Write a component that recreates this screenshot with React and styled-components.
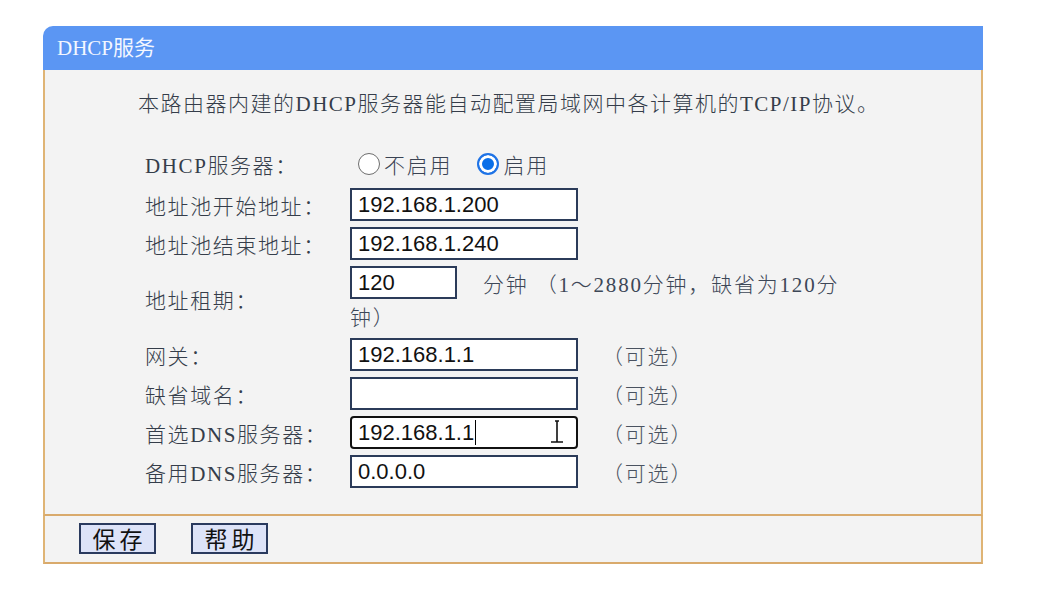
import React from "react";
import styled, { createGlobalStyle } from "styled-components";

const GlobalStyle = createGlobalStyle`
  body {
    margin: 0;
    background: #ffffff;
    font-family: "Liberation Serif", "Noto Sans CJK SC", serif;
  }
`;

const rows = [
  { label: "地址池开始地址：", value: "192.168.1.200" },
  { label: "地址池结束地址：", value: "192.168.1.240" },
];

const optionalRows = [
  { label: "网关：", value: "192.168.1.1" },
  { label: "缺省域名：", value: "" },
  { label: "首选DNS服务器：", value: "192.168.1.1", active: true },
  { label: "备用DNS服务器：", value: "0.0.0.0" },
];

const App = () => {
  return (
    <>
      <GlobalStyle />
      <Page>
        <Panel>
          <PanelHeader>DHCP服务</PanelHeader>
          <PanelBody>
            <Intro>本路由器内建的DHCP服务器能自动配置局域网中各计算机的TCP/IP协议。</Intro>
            <Form>
              <Label tall>DHCP服务器：</Label>
              <Value>
                <RadioOption>
                  <Radio />
                  不启用
                </RadioOption>
                <RadioOption>
                  <Radio checked />
                  启用
                </RadioOption>
              </Value>

              {rows.map((r) => (
                <React.Fragment key={r.label}>
                  <Label>{r.label}</Label>
                  <Value>
                    <TextBox>{r.value}</TextBox>
                  </Value>
                </React.Fragment>
              ))}

              <Label>地址租期：</Label>
              <LeaseValue>
                <LeaseLine>
                  <TextBox width={107}>120</TextBox>
                  <Hint>分钟 （1～2880分钟，缺省为120分</Hint>
                </LeaseLine>
                <LeaseLine>钟）</LeaseLine>
              </LeaseValue>

              {optionalRows.map((r) => (
                <React.Fragment key={r.label}>
                  <Label>{r.label}</Label>
                  <Value>
                    <TextBox active={r.active}>
                      {r.value}
                      {r.active && <Caret />}
                      {r.active && (
                        <Pointer width="14" height="24" viewBox="0 0 14 24">
                          <path d="M5 1h4M7 1v21M1 22h12" stroke="#111" strokeWidth="1.6" fill="none" />
                        </Pointer>
                      )}
                    </TextBox>
                    <Optional>（可选）</Optional>
                  </Value>
                </React.Fragment>
              ))}
            </Form>
          </PanelBody>
          <PanelFooter>
            <Button>保存</Button>
            <Button>帮助</Button>
          </PanelFooter>
        </Panel>
      </Page>
    </>
  );
};

const Page = styled.div`
  padding: 26px 0 0 43px;
`;

const Panel = styled.div`
  width: 940px;
`;

const PanelHeader = styled.div`
  height: 44px;
  background: #5b96f3;
  border-top-left-radius: 10px;
  color: #f4f7ff;
  font-size: 21px;
  line-height: 44px;
  padding-left: 14px;
`;

const PanelBody = styled.div`
  background: #f3f3f3;
  border-left: 2px solid #dfb475;
  border-right: 2px solid #dfb475;
  border-bottom: 2px solid #d9aa6c;
  padding: 22px 0 26px 93px;
  color: #353d4a;
  font-weight: 300;
`;

const Intro = styled.div`
  font-size: 21px;
  letter-spacing: 1.5px;
  line-height: 24px;
  white-space: nowrap;
`;

const Form = styled.div`
  display: grid;
  grid-template-columns: 205px 500px;
  row-gap: 6px;
  margin: 30px 0 0 7px;
  align-items: center;
`;

const Label = styled.div`
  font-size: 21px;
  letter-spacing: 1.6px;
  min-height: ${(p) => (p.tall ? 36 : 33)}px;
  display: flex;
  align-items: center;
`;

const Value = styled.div`
  display: flex;
  align-items: center;
  min-height: 33px;
`;

const LeaseValue = styled.div`
  font-size: 21px;
  letter-spacing: 1.8px;
  color: #3d4757;
`;

const LeaseLine = styled.div`
  display: flex;
  align-items: center;
  height: 33px;
`;

const RadioOption = styled.label`
  display: inline-flex;
  align-items: center;
  gap: 4px;
  font-size: 21px;
  letter-spacing: 1.8px;
  margin-left: 8px;
  margin-right: 17px;
  color: #3a4353;
`;

const Radio = styled.span`
  width: 22px;
  height: 22px;
  box-sizing: border-box;
  border-radius: 50%;
  border: ${(p) => (p.checked ? "2px solid #1f73e6" : "1px solid #6d6d6d")};
  background: ${(p) => (p.checked ? "#0a6fe8" : "#ffffff")};
  box-shadow: ${(p) => (p.checked ? "inset 0 0 0 3px #ffffff" : "none")};
`;

const TextBox = styled.div`
  position: relative;
  display: inline-flex;
  align-items: center;
  flex: none;
  box-sizing: border-box;
  width: ${(p) => p.width || 228}px;
  height: 33px;
  padding: 0 6px;
  background: #ffffff;
  border: 2px solid ${(p) => (p.active ? "#111111" : "#2b3b59")};
  border-radius: ${(p) => (p.active ? "4px" : "0")};
  font-family: "Liberation Sans", Arial, sans-serif;
  font-weight: 400;
  font-size: 22px;
  letter-spacing: 0;
  color: #111111;
`;

const Caret = styled.span`
  display: inline-block;
  width: 1px;
  height: 25px;
  background: #000;
  margin-left: 1px;
`;

const Pointer = styled.svg`
  position: absolute;
  left: 198px;
  top: 2px;
`;

const Hint = styled.span`
  margin-left: 26px;
  white-space: nowrap;
`;

const Optional = styled.span`
  margin-left: 24px;
  font-size: 21px;
  letter-spacing: 1.8px;
  color: #4a5260;
`;

const PanelFooter = styled.div`
  display: flex;
  gap: 35px;
  height: 48px;
  box-sizing: border-box;
  padding: 7px 0 0 34px;
  background: #f3f3f3;
  border-left: 2px solid #dfb475;
  border-right: 2px solid #dfb475;
  border-bottom: 2px solid #d9aa6c;
`;

const Button = styled.button`
  width: 77px;
  height: 31px;
  box-sizing: border-box;
  padding: 0;
  background: #dde3f8;
  border: 2px solid #2a3a5e;
  border-radius: 0;
  font-family: "Noto Sans CJK SC", sans-serif;
  font-size: 23px;
  letter-spacing: 4px;
  text-indent: 4px;
  line-height: 27px;
  color: #111;
`;

export default App;
